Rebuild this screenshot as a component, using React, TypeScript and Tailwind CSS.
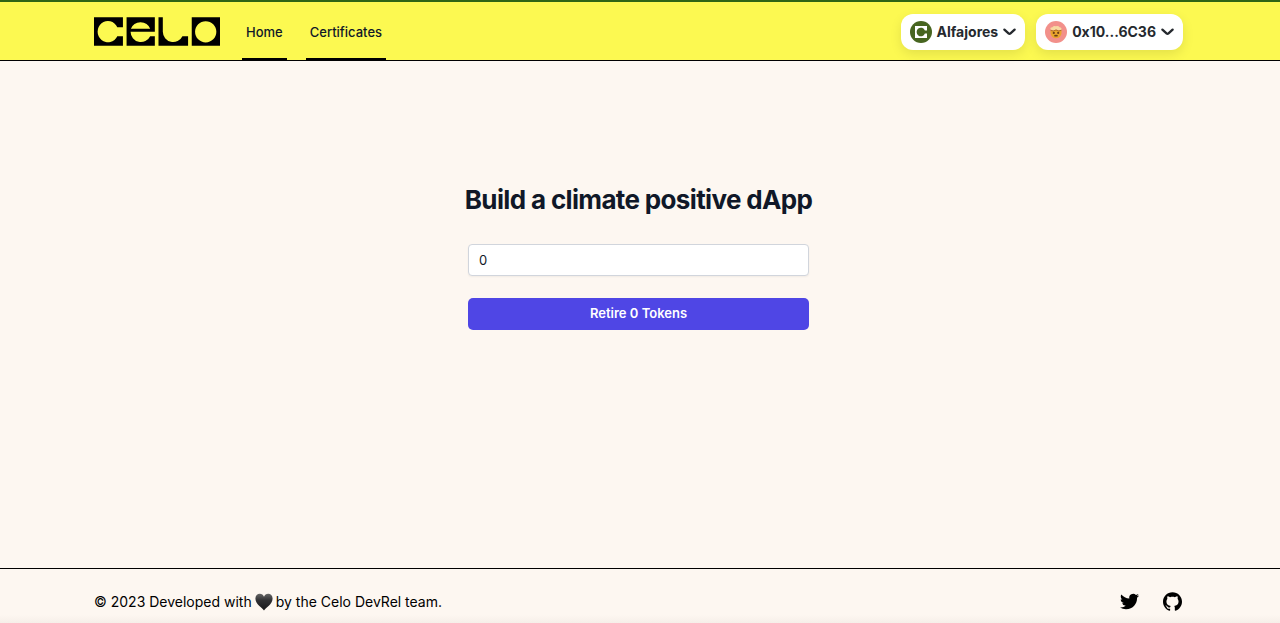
import { useState } from "react";

function CeloLogo() {
  return (
    <svg viewBox="0 0 379 86" className="h-[29px] w-[126px]" role="img" aria-label="Celo">
      <path d="M0 0H87V30H70A31 32 0 1 0 70 57H87V86H0Z" fill="#000" />
      <path
        fillRule="evenodd"
        fill="#000"
        d="M98 0H183V44H110A31 31 0 0 0 169 57H183V86H98ZM111 35H169A31 31 0 0 0 111 35Z"
      />
      <path d="M194 0H207V44A31 31 0 0 0 266 57H283V86H194Z" fill="#000" />
      <path
        fillRule="evenodd"
        fill="#000"
        d="M294 0H379V86H294ZM336 12A32 32 0 1 0 336 76A32 32 0 1 0 336 12Z"
      />
    </svg>
  );
}

function ChainIcon() {
  return (
    <svg viewBox="0 0 22 22" className="size-[22px]" aria-hidden="true">
      <circle cx="11" cy="11" r="11" fill="#476520" />
      <path
        fill="#fff"
        d="M5 5H17V9.400H14.900A4.300 4.300 0 1 0 14.900 12.600H17V17H5Z"
      />
    </svg>
  );
}

function AvatarIcon() {
  return (
    <svg viewBox="0 0 22 22" className="size-[22px]" aria-hidden="true">
      <circle cx="11" cy="11" r="11" fill="#f2908a" />
      <path d="M5.400 9.400Q5 16.800 11 17.200Q17 16.800 16.600 9.400L13.600 9.800L11 8.800L8.200 9.800Z" fill="#e9a52c" />
      <path
        d="M5.600 8.500Q4.800 6.400 7.400 6.300Q8.600 4.600 10.800 5.300Q13.400 4.400 14.600 6.300Q17 6.600 16.400 8.700L13.800 9.300L11.200 8.400L8.400 9.400Z"
        fill="#f7d9a0"
      />
      <path d="M5.600 9.400L8.300 10L11 9L13.800 10L16.400 9.300" stroke="#a86a1c" strokeWidth=".9" fill="none" />
      <circle cx="8.800" cy="11.900" r="1.100" fill="#6b3c16" />
      <circle cx="13.200" cy="11.900" r="1.100" fill="#6b3c16" />
      <ellipse cx="11" cy="14.700" rx="1.900" ry=".9" fill="#6b3c16" />
    </svg>
  );
}

function Chevron() {
  return (
    <svg viewBox="0 0 13 8" className="h-[8px] w-[13px]" fill="none" aria-hidden="true">
      <path
        d="M1.400 1.600L5.500 5.400Q6.500 6.300 7.500 5.400L11.600 1.600"
        stroke="#25292e"
        strokeWidth="2.300"
        strokeLinecap="round"
      />
    </svg>
  );
}

function BlackHeart() {
  return (
    <svg viewBox="0 0 18 18" className="mx-[3px] inline size-[18px] align-[-4px]" role="img" aria-label="black heart">
      <defs>
        <linearGradient id="heart" x1="0" y1="0" x2="0" y2="1">
          <stop offset="0" stopColor="#666" />
          <stop offset=".4" stopColor="#303033" />
          <stop offset="1" stopColor="#17171a" />
        </linearGradient>
      </defs>
      <path
        d="M9 17.500C7.500 15 .4 11.200 .4 5.500C.4 2.600 2.400 .8 4.800 .8C6.800 .8 8.300 2 9 3.700C9.700 2 11.200 .8 13.200 .8C15.600 .8 17.600 2.600 17.600 5.500C17.600 11.200 10.500 15 9 17.500Z"
        fill="url(#heart)"
      />
    </svg>
  );
}

const pill =
  "flex h-9 items-center gap-[5px] rounded-xl bg-white px-[9px] text-[14px] font-bold text-[#25292e] shadow-[0_4px_12px_rgba(0,0,0,0.1)]";
const navLink = "flex items-center border-b-2 border-black px-1 pt-1 text-[13px] font-medium text-gray-900";

export default function App() {
  const [amount, setAmount] = useState("0");
  return (
    <div className="flex min-h-screen flex-col bg-[#fdf7f1] font-['Inter',sans-serif] text-black">
      <header className="border-t-2 border-b border-t-[#2f6514] border-b-black bg-[#fcf951]">
        <div className="flex h-[58px] justify-between pt-px pr-[97px] pl-[94px]">
          <div className="flex gap-[22px]">
            <a href="#" className="flex items-center">
              <CeloLogo />
            </a>
            <nav className="flex gap-[19px]">
              <a href="#home" className={navLink}>Home</a>
              <a href="#certificates" className={navLink}>Certificates</a>
            </nav>
          </div>
          <div className="flex items-center gap-[11px]">
            <button type="button" className={pill}>
              <ChainIcon />
              <span>Alfajores</span>
              <Chevron />
            </button>
            <button type="button" className={pill}>
              <AvatarIcon />
              <span>0x10...6C36</span>
              <Chevron />
            </button>
          </div>
        </div>
      </header>

      <main className="flex flex-1 flex-col items-center pt-[123px] pr-[3px]">
        <form className="flex w-full max-w-[341px] flex-col" onSubmit={(e) => e.preventDefault()}>
          <h1 className="self-center text-[26px] leading-8 font-bold tracking-tight whitespace-nowrap text-gray-900">
            Build a climate positive dApp
          </h1>
          <input
            type="text"
            aria-label="Token amount"
            value={amount}
            onChange={(e) => setAmount(e.target.value)}
            className="mt-7 h-8 w-full rounded border border-gray-300 bg-white px-2.5 text-[13px] text-gray-900 shadow-xs"
          />
          <button
            type="submit"
            className="mt-[22px] h-8 rounded-[5px] bg-[#4f46e5] text-[13px] font-semibold text-white"
          >
            Retire {amount} Tokens
          </button>
        </form>
      </main>

      <footer className="border-t border-black">
        <div className="flex h-[54px] items-center justify-between bg-linear-to-b from-transparent from-85% to-[#f6efe9] pt-2.5 pr-[98px] pl-[94px]">
          <p className="text-[14px]">
            © 2023 Developed with
            <BlackHeart />
            by the Celo DevRel team.
          </p>
          <div className="flex items-center gap-6">
            <a href="#twitter" aria-label="Twitter">
              <svg viewBox="0 0 24 24" className="size-[19px]" fill="currentColor" aria-hidden="true">
                <path d="M23.953 4.570a10 10 0 01-2.825.775 4.958 4.958 0 002.163-2.723c-.951.555-2.005.959-3.127 1.184a4.920 4.920 0 00-8.384 4.482C7.690 8.095 4.067 6.130 1.640 3.162a4.822 4.822 0 00-.666 2.475c0 1.710.870 3.213 2.188 4.096a4.904 4.904 0 01-2.228-.616v.060a4.923 4.923 0 003.946 4.827 4.996 4.996 0 01-2.212.085 4.936 4.936 0 004.604 3.417 9.867 9.867 0 01-6.102 2.105c-.390 0-.779-.023-1.170-.067a13.995 13.995 0 007.557 2.209c9.053 0 13.998-7.496 13.998-13.985 0-.210 0-.420-.015-.630A9.935 9.935 0 0024 4.590z" />
              </svg>
            </a>
            <a href="#github" aria-label="GitHub">
              <svg viewBox="0 0 24 24" className="size-[19px]" fill="currentColor" aria-hidden="true">
                <path d="M12 .297c-6.630 0-12 5.373-12 12 0 5.303 3.438 9.800 8.205 11.385.6.113.820-.258.820-.577 0-.285-.010-1.040-.015-2.040-3.338.724-4.042-1.610-4.042-1.610C4.422 18.070 3.633 17.700 3.633 17.700c-1.087-.744.084-.729.084-.729 1.205.084 1.838 1.236 1.838 1.236 1.070 1.835 2.809 1.305 3.495.998.108-.776.417-1.305.760-1.605-2.665-.300-5.466-1.332-5.466-5.930 0-1.310.465-2.380 1.235-3.220-.135-.303-.540-1.523.105-3.176 0 0 1.005-.322 3.300 1.230.960-.267 1.980-.399 3-.405 1.020.006 2.040.138 3 .405 2.280-1.552 3.285-1.230 3.285-1.230.645 1.653.240 2.873.120 3.176.765.840 1.230 1.910 1.230 3.220 0 4.610-2.805 5.625-5.475 5.920.420.360.810 1.096.810 2.220 0 1.606-.015 2.896-.015 3.286 0 .315.210.690.825.570C20.565 22.092 24 17.592 24 12.297c0-6.627-5.373-12-12-12" />
              </svg>
            </a>
          </div>
        </div>
      </footer>
    </div>
  );
}
